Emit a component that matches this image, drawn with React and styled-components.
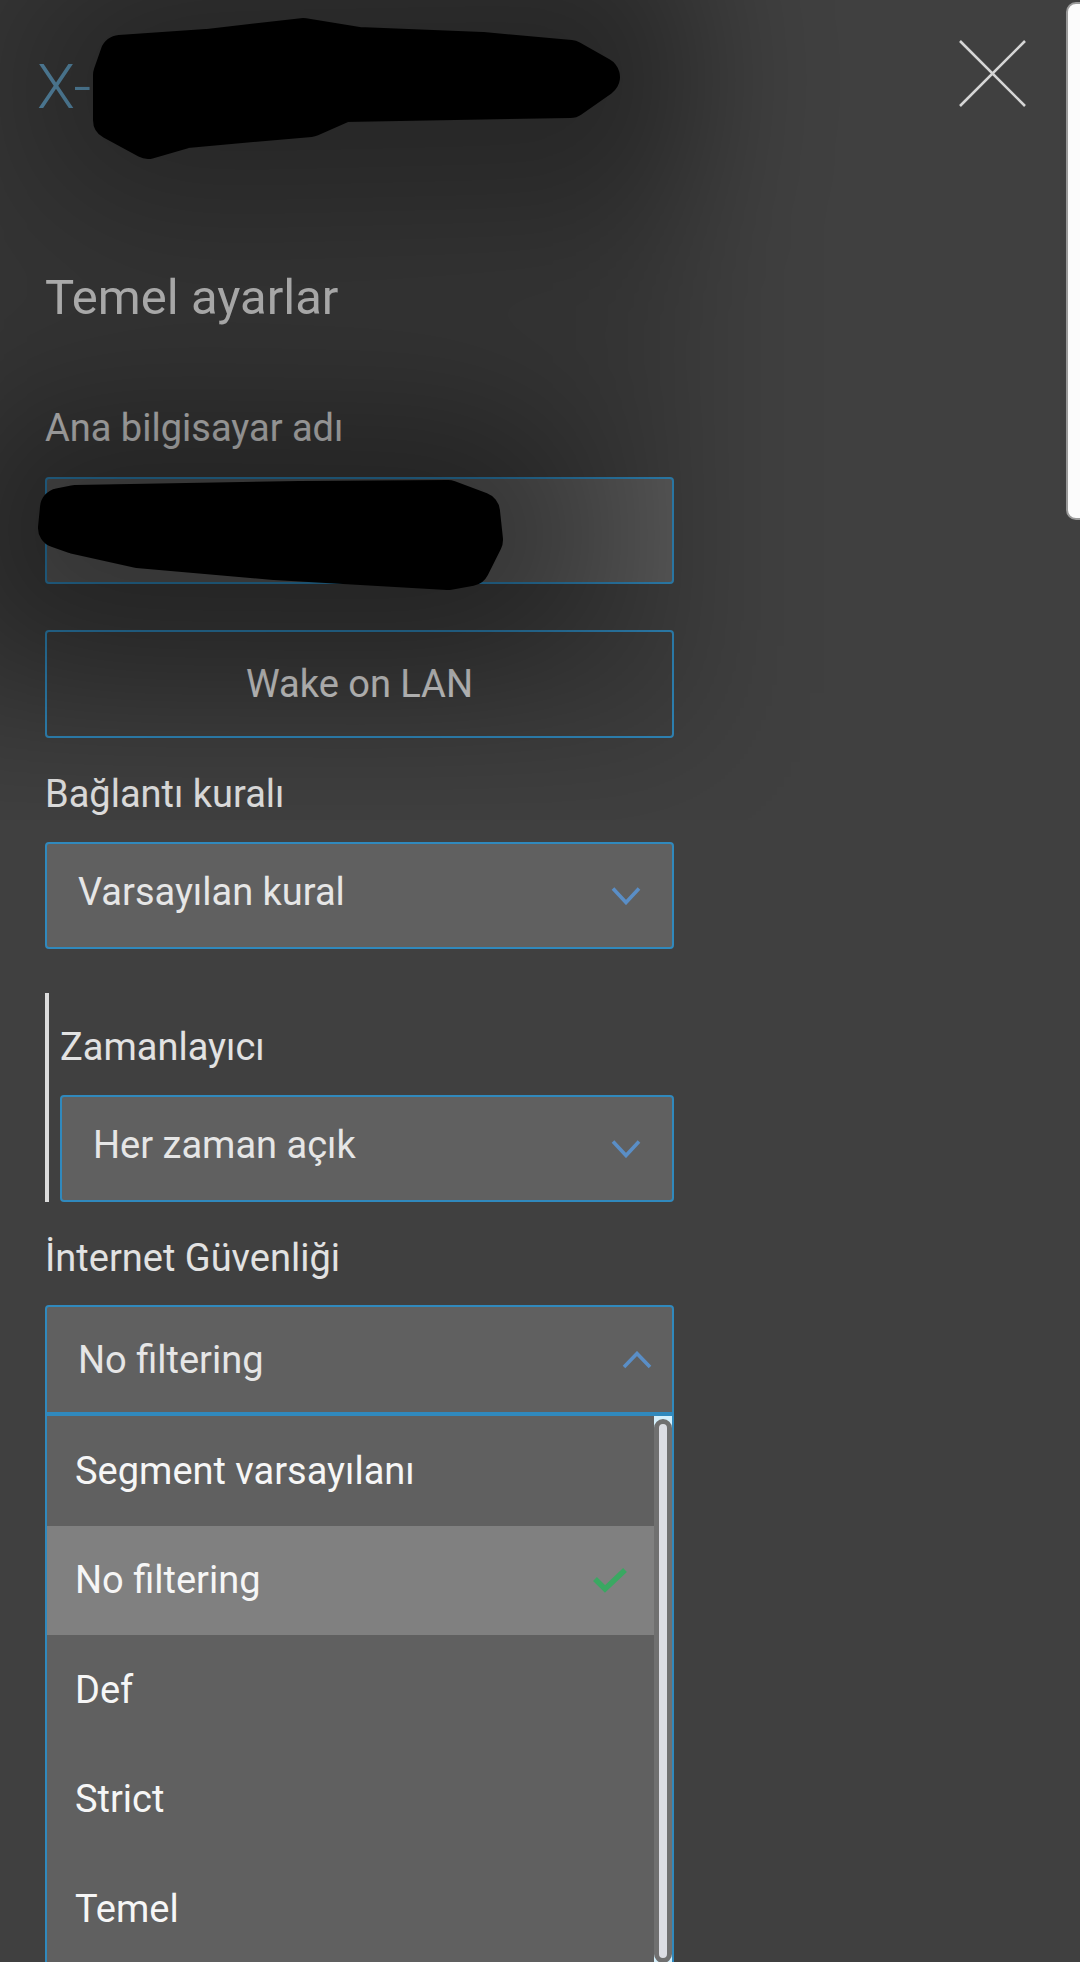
import React from "react";
import styled, { createGlobalStyle } from "styled-components";

const GlobalStyle = createGlobalStyle`
  html, body {
    margin: 0;
    padding: 0;
    background: #404040;
  }
  body {
    font-family: Roboto, "Noto Sans", "Liberation Sans", sans-serif;
  }
`;

const Screen = styled.div`
  position: relative;
  width: 1080px;
  height: 1962px;
  overflow: hidden;
  background: #404040;
`;

const Header = styled.header`
  display: flex;
  justify-content: space-between;
  align-items: flex-start;
  padding: 40px 54px 0 37px;
`;

const Title = styled.h1`
  margin: 16px 0 0;
  font-size: 62px;
  line-height: 62px;
  font-weight: 300;
  color: #68a4c8;
`;

const CloseButton = styled.button`
  width: 67px;
  height: 67px;
  padding: 0;
  border: 0;
  background: none;
  cursor: pointer;
  svg {
    display: block;
  }
`;

const Form = styled.main`
  display: flex;
  flex-direction: column;
  width: 629px;
  margin-left: 45px;
`;

const SectionTitle = styled.h2`
  margin: 155px 0 0;
  font-size: 49px;
  line-height: 49px;
  font-weight: 400;
  color: #dadada;
`;

const Label = styled.div`
  margin-top: ${({ $gap }) => $gap}px;
  font-size: 38px;
  line-height: 44px;
  color: #e2e2e2;
`;

const TextBox = styled.div`
  margin-top: 27px;
  height: 107px;
  box-sizing: border-box;
  border: 2px solid #3089bd;
  border-radius: 4px;
  background: #5e5e5e;
`;

const WakeButton = styled.button`
  margin-top: 46px;
  height: 108px;
  box-sizing: border-box;
  border: 2px solid #3089bd;
  border-radius: 4px;
  background: transparent;
  font-family: inherit;
  font-size: 38px;
  color: #e0e0e0;
  cursor: pointer;
`;

const Select = styled.div`
  margin-top: ${({ $gap }) => $gap}px;
  height: ${({ $open }) => ($open ? 109 : 107)}px;
  box-sizing: border-box;
  display: flex;
  align-items: center;
  justify-content: space-between;
  padding: 0 ${({ $open }) => ($open ? 20 : 31)}px 0 31px;
  border: 2px solid #3089bd;
  border-radius: ${({ $open }) => ($open ? "4px 4px 0 0" : "4px")};
  background: #606060;
  font-size: 38px;
  color: #e6e6e6;
  svg {
    display: block;
    flex-shrink: 0;
  }
`;

const Value = styled.span`
  margin-bottom: ${({ $open }) => ($open ? 0 : 7)}px;
`;

const TimerGroup = styled.section`
  margin-top: 44px;
  padding: 32px 0 0 11px;
  border-left: 4px solid #dcdcdc;
`;

const OptionList = styled.div`
  display: flex;
  height: 549px;
  box-sizing: border-box;
  border: 2px solid #3089bd;
  border-bottom: 0;
  background: #606060;
`;

const Options = styled.ul`
  flex: 1;
  margin: 0;
  padding: 0;
  list-style: none;
`;

const Option = styled.li`
  height: 109.5px;
  display: flex;
  align-items: center;
  justify-content: space-between;
  padding: 0 26px 0 28px;
  background: ${({ $selected }) => ($selected ? "#808080" : "transparent")};
  font-size: 38px;
  color: #f6f6f6;
`;

const ScrollTrack = styled.div`
  width: 18px;
  display: flex;
  background: #d4effb;
`;

const ScrollThumb = styled.div`
  flex: 1;
  margin: 3px 0 0;
  border: 5px solid #707070;
  border-radius: 10px;
  background: #dcdde3;
`;

const PageScrollbar = styled.div`
  position: absolute;
  left: 1066px;
  top: 2px;
  width: 30px;
  height: 518px;
  box-sizing: border-box;
  border: 2px solid #9a9a9a;
  border-radius: 10px;
  background: #fcfcfc;
`;

const Redactions = styled.svg`
  position: absolute;
  left: 0;
  top: 0;
  pointer-events: none;
`;

const ChevronDown = () => (
  <svg width="30" height="19" viewBox="0 0 30 19">
    <path d="M2 2.5 L15 16.5 L28 2.5" fill="none" stroke="#5a8ec6" strokeWidth="3.6" />
  </svg>
);

const ChevronUp = () => (
  <svg width="30" height="18" viewBox="0 0 30 18">
    <path d="M2 16 L15 2.5 L28 16" fill="none" stroke="#5a8ec6" strokeWidth="3.6" />
  </svg>
);

const Check = () => (
  <svg width="36" height="28" viewBox="0 0 36 28">
    <path d="M3 13 L13 23 L33 4" fill="none" stroke="#3aa862" strokeWidth="5.5" />
  </svg>
);

const options = ["Segment varsayılanı", "No filtering", "Def", "Strict", "Temel"];

export default function App() {
  return (
    <Screen>
      <GlobalStyle />
      <Header>
        <Title>X-</Title>
        <CloseButton aria-label="Kapat">
          <svg width="67" height="67" viewBox="0 0 67 67">
            <path d="M1 1 L66 66 M66 1 L1 66" stroke="#d6d6d6" strokeWidth="2.6" />
          </svg>
        </CloseButton>
      </Header>

      <Form>
        <SectionTitle>Temel ayarlar</SectionTitle>
        <Label $gap={84}>Ana bilgisayar adı</Label>
        <TextBox />
        <WakeButton>Wake on LAN</WakeButton>

        <Label $gap={34}>Bağlantı kuralı</Label>
        <Select $gap={26}>
          <Value>Varsayılan kural</Value>
          <ChevronDown />
        </Select>

        <TimerGroup>
          <Label $gap={0}>Zamanlayıcı</Label>
          <Select $gap={26}>
            <Value>Her zaman açık</Value>
            <ChevronDown />
          </Select>
        </TimerGroup>

        <Label $gap={34}>İnternet Güvenliği</Label>
        <Select $gap={25} $open>
          <Value $open>No filtering</Value>
          <ChevronUp />
        </Select>
        <OptionList>
          <Options>
            {options.map((o) => (
              <Option key={o} $selected={o === "No filtering"}>
                <span>{o}</span>
                {o === "No filtering" && <Check />}
              </Option>
            ))}
          </Options>
          <ScrollTrack>
            <ScrollThumb />
          </ScrollTrack>
        </OptionList>
      </Form>

      <PageScrollbar />

      <Redactions width="1080" height="820" viewBox="0 0 1080 820">
        <defs>
          <filter id="soft" x="-50%" y="-50%" width="200%" height="200%">
            <feGaussianBlur stdDeviation="70" />
          </filter>
        </defs>
        <g filter="url(#soft)">
          <rect x="-120" y="-120" width="820" height="860" fill="#000" opacity="0.2" />
          <path d="M160 90 L580 80" stroke="#000" strokeWidth="260" strokeLinecap="round" opacity="0.25" />
          <path d="M90 530 L455 535" stroke="#000" strokeWidth="260" strokeLinecap="round" opacity="0.3" />
        </g>
        <path
          d="M120 55 L207 49 L303 38 L358 47 L482 52 L570 60 L600 77 L570 98 L344 102 L310 117 L186 128 L148 139 L113 120 L113 75 Z"
          fill="#000"
          stroke="#000"
          strokeWidth="40"
          strokeLinejoin="round"
        />
        <path
          d="M60 508 L75 505 L300 501 L448 500 L480 512 L483 540 L470 566 L448 570 L275 560 L138 548 L75 534 L58 528 Z"
          fill="#000"
          stroke="#000"
          strokeWidth="40"
          strokeLinejoin="round"
        />
      </Redactions>
    </Screen>
  );
}
